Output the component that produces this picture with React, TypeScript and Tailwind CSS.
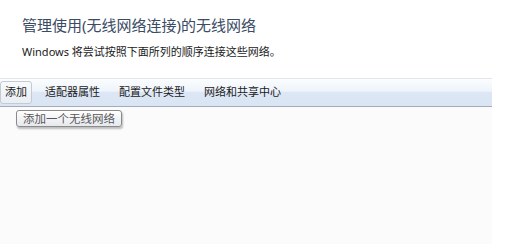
export default function App() {
  const items = ["适配器属性", "配置文件类型", "网络和共享中心"];

  return (
    <div className="relative w-[510px] h-[244px] overflow-hidden bg-white font-['Noto_Sans','Noto_Sans_CJK_SC',sans-serif]">
      <div className="pl-[22px] pt-[15px]">
        <h1 className="text-[15px] leading-[20px] text-[#3a4b63] font-normal">管理使用(无线网络连接)的无线网络</h1>
        <p className="mt-[9px] text-[11px] leading-[16px] text-[#1a1a1a]">Windows 将尝试按照下面所列的顺序连接这些网络。</p>
      </div>

      <div className="mt-[18px] w-[492px] h-[29px] border-t border-b border-t-[#e2e6ea] border-b-[#a3acb8] bg-[linear-gradient(to_bottom,#fbfdff_0%,#eef4fb_45%,#dce6f4_50%,#dae5f3_100%)] flex items-center gap-[7px]">
        <button className="h-[23px] px-[4px] border border-[#c3cad2] rounded-[3px] bg-[linear-gradient(to_bottom,#f8fafc,#e9eef4)] text-[11px] text-[#1a1a1a]">
          添加
        </button>
        {items.map((t) => (
          <span key={t} className="px-[6px] text-[11px] text-[#1a1a1a]">
            {t}
          </span>
        ))}
      </div>

      <div className="w-[492px] h-[137px] bg-[#fbfbfb]" />

      <div className="absolute left-[16px] top-[110px] h-[17px] px-[6px] flex items-center border border-[#8a8a8a] rounded-[3px] bg-[linear-gradient(to_bottom,#ffffff,#e6e8ee)] shadow-[1px_2px_2px_rgba(0,0,0,0.25)] text-[11.5px] text-[#575757] leading-none">
        添加一个无线网络
      </div>
    </div>
  );
}
